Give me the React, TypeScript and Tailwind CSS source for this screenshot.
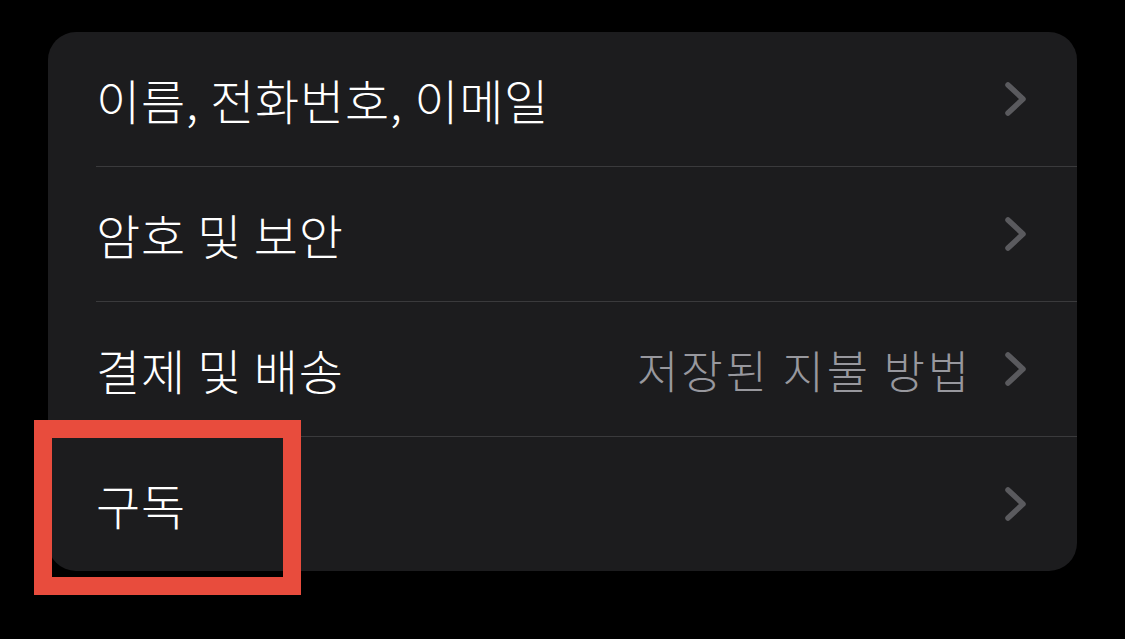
import React from "react";

function Chevron() {
  return (
    <svg width="25" height="38" viewBox="0 0 25 38" className="shrink-0">
      <polyline
        points="5,5 20,19 5,33"
        fill="none"
        stroke="#5a5a5e"
        strokeWidth="5.5"
        strokeLinecap="round"
        strokeLinejoin="round"
      />
    </svg>
  );
}

function Row({ label, value, last }: { label: string; value?: string; last?: boolean }) {
  return (
    <div className="flex flex-col">
      <div className="h-[134px] flex items-center pl-[48px] pr-[49px]">
        <span className="text-white text-[48px] leading-none tracking-[0.8px] font-light">{label}</span>
        <div className="flex-1" />
        {value && (
          <span className="text-[#98989e] text-[45px] leading-none mr-[31px] tracking-[2.8px] font-light">{value}</span>
        )}
        <Chevron />
      </div>
      {!last && <div className="ml-[48px] h-px bg-[#3a3a3c]" />}
    </div>
  );
}

export default function App() {
  return (
    <div
      className="w-[1125px] h-[639px] bg-black relative pt-[32px] pl-[48px]"
      style={{ fontFamily: '"Noto Sans CJK KR", "Noto Sans", sans-serif' }}
    >
      <div className="w-[1029px] h-[539px] bg-[#1c1c1e] rounded-[28px] flex flex-col overflow-hidden">
        <Row label="이름, 전화번호, 이메일" />
        <Row label="암호 및 보안" />
        <Row label="결제 및 배송" value="저장된 지불 방법" />
        <Row label="구독" last />
      </div>
      <div className="absolute left-[34px] top-[420px] w-[267px] h-[175px] border-[18px] border-[#e84c3d]" />
    </div>
  );
}
